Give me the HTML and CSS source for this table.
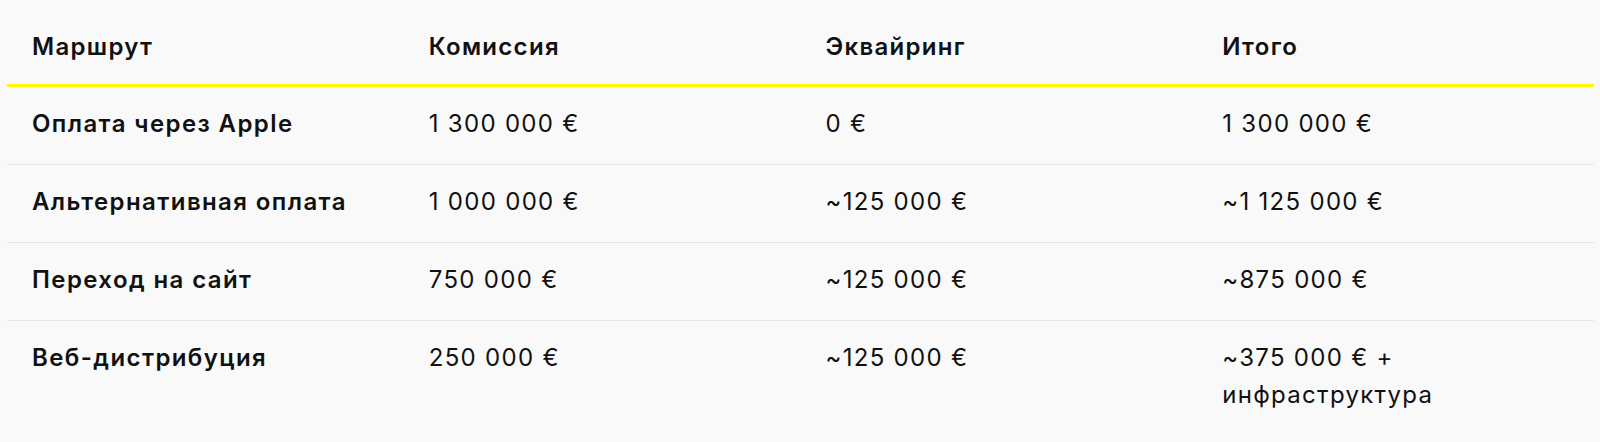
FILE: index.html
```html
<!DOCTYPE html>
<html lang="ru">
<head>
<meta charset="utf-8">
<link rel="stylesheet" href="styles.css">
</head>
<body>
<table class="cmp">
  <thead>
    <tr>
      <th>Маршрут</th>
      <th>Комиссия</th>
      <th>Эквайринг</th>
      <th>Итого</th>
    </tr>
  </thead>
  <tbody>
    <tr>
      <td class="name">Оплата через Apple</td>
      <td>1&nbsp;300&nbsp;000&nbsp;€</td>
      <td>0&nbsp;€</td>
      <td>1&nbsp;300&nbsp;000&nbsp;€</td>
    </tr>
    <tr>
      <td class="name">Альтернативная оплата</td>
      <td>1&nbsp;000&nbsp;000&nbsp;€</td>
      <td>~125&nbsp;000&nbsp;€</td>
      <td>~1&nbsp;125&nbsp;000&nbsp;€</td>
    </tr>
    <tr>
      <td class="name">Переход на сайт</td>
      <td>750&nbsp;000&nbsp;€</td>
      <td>~125&nbsp;000&nbsp;€</td>
      <td>~875&nbsp;000&nbsp;€</td>
    </tr>
    <tr>
      <td class="name">Веб-дистрибуция</td>
      <td>250&nbsp;000&nbsp;€</td>
      <td>~125&nbsp;000&nbsp;€</td>
      <td>~375&nbsp;000&nbsp;€ +<br>инфраструктура</td>
    </tr>
  </tbody>
</table>
</body>
</html>
```

FILE: styles.css
```css
html, body {
  margin: 0;
  padding: 0;
  background: #f9f9f9;
}
body {
  padding: 9px 6px 0 7px;
  font-family: Inter, "Noto Sans", sans-serif;
  color: #111;
}
.cmp {
  width: 100%;
  border-collapse: collapse;
  table-layout: fixed;
  font-size: 24px;
  line-height: 37px;
  letter-spacing: 1.3px;
}
.cmp th {
  text-align: left;
  font-weight: 600;
  padding: 19px 25px 19px;
  border-bottom: 3px solid #fff800;
}
.cmp td {
  text-align: left;
  vertical-align: top;
  font-weight: 400;
  padding: 18px 25px 22px;
  border-bottom: 1px solid #e6e6e6;
}
.cmp tbody tr:last-child td {
  border-bottom: none;
}
.cmp td.name {
  font-weight: 600;
  letter-spacing: 1.4px;
}
```
